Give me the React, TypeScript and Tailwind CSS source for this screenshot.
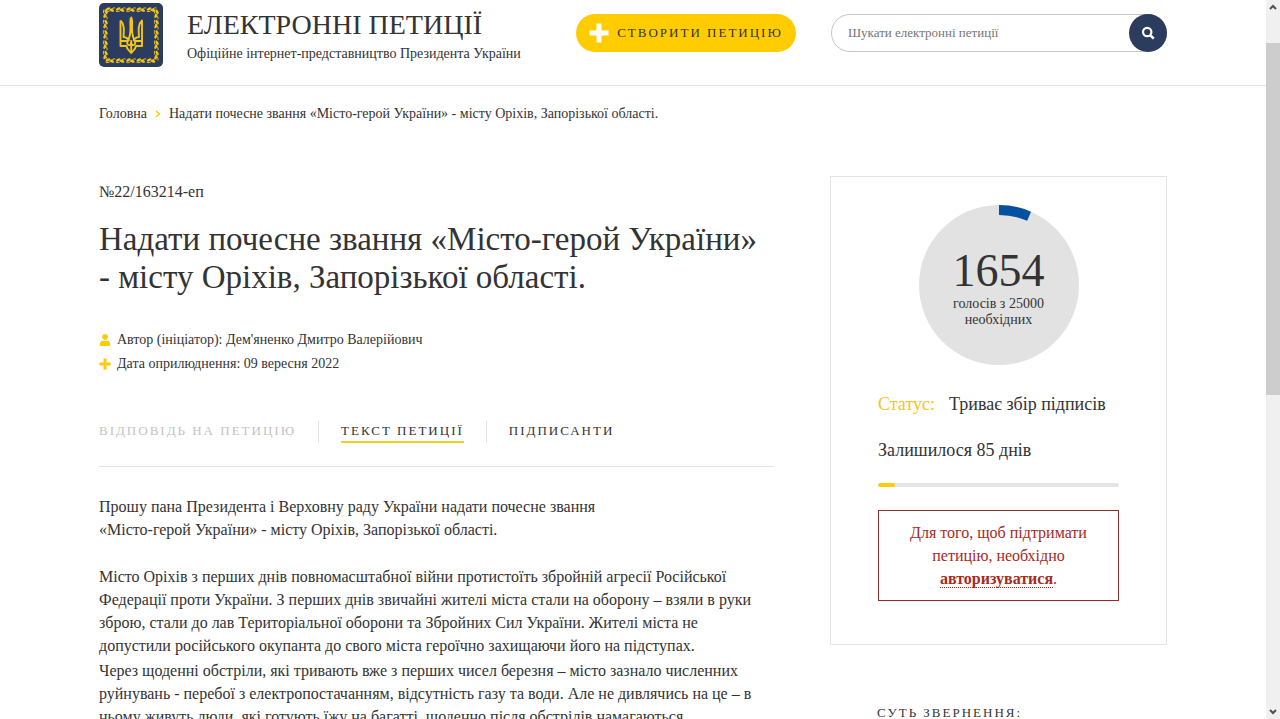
import React from 'react';
import { FaUser } from 'react-icons/fa';

const cells = [0, 1, 2, 3, 4];

function Ornament({ x, y, turn }: { x: number; y: number; turn: number }) {
  return (
    <g transform={`translate(${x} ${y}) rotate(${turn})`} fill="#f3c516">
      <ellipse cx="-2.600" cy="-0.600" rx="2.500" ry="1.300" transform="rotate(-28 -2.600 -0.600)" />
      <ellipse cx="1.400" cy="0.700" rx="2.300" ry="1.300" transform="rotate(24 1.400 0.700)" />
      <path d="M-5 1.600C-3.400 2.600-1.500 2.200 0 0.600S3.200-2.200 4.800-1.400" fill="none" stroke="#f3c516" strokeWidth="1" />
    </g>
  );
}

function PlusIcon({ className }: { className: string }) {
  return (
    <svg className={className} viewBox="0 0 20 20" fill="currentColor" aria-hidden="true">
      <path d="M7.500 0.500H12.500V7.500H19.500V12.500H12.500V19.500H7.500V12.500H0.500V7.500H7.500Z" />
    </svg>
  );
}

function Logo() {
  return (
    <svg className="size-16 shrink-0" viewBox="0 0 64 64" role="img" aria-label="Герб України">
      <rect width="64" height="64" rx="5" fill="#2b3c5e" />
      {cells.map((i) => (
        <g key={i}>
          <Ornament x={11.5 + i * 10.3} y={6.5} turn={0} />
          <Ornament x={11.5 + i * 10.3} y={57.5} turn={0} />
          <Ornament x={6.5} y={11.5 + i * 10.3} turn={90} />
          <Ornament x={57.5} y={11.5 + i * 10.3} turn={90} />
        </g>
      ))}
      <g fill="none" stroke="#f3c516" strokeWidth="1.9" strokeLinejoin="round">
        <path d="M21.500 17.500V43H27.500C28 46.500 30 47 32.200 50C34.400 47 36.400 46.500 37 43H43V17.500C39 21 39.500 27 40 34C37 34.200 35.500 35.500 34.400 38" />
        <path d="M21.500 17.500C25.500 21 25 27 24.500 34C27.500 34.200 29 35.500 30.100 38" />
        <path d="M32.200 14.500C30.800 17 31.400 20 31.500 25C31.500 31 30.600 35 28.500 38.500C27.500 40.500 29 42.500 31 42C32 41.500 32.200 40 32.200 38C32.200 40 32.500 41.500 33.500 42C35.500 42.500 37 40.500 36 38.500C33.900 35 33 31 33 25C33.100 20 33.700 17 32.200 14.500ZM32.200 38V50M21.500 38H28.500M36 38H43" />
      </g>
    </svg>
  );
}

function Header() {
  return (
    <header className="border-b border-[#e4e4e4]">
      <div className="mx-auto flex h-[85px] max-w-[1068px] items-start">
        <div className="flex flex-1 gap-6 pt-[3px]">
          <Logo />
          <div className="pt-1">
            <p className="text-[28px] leading-9 whitespace-nowrap">ЕЛЕКТРОННІ ПЕТИЦІЇ</p>
            <p className="text-[14px] leading-[22px] whitespace-nowrap">Офіційне інтернет-представництво Президента України</p>
          </div>
        </div>
        <button type="button" className="mt-3.5 mr-[35px] flex h-[38px] w-[220px] items-center justify-center gap-2 rounded-full bg-[#ffcc00] text-[13px] tracking-[2px] whitespace-nowrap">
          <PlusIcon className="size-5 text-white" />
          СТВОРИТИ ПЕТИЦІЮ
        </button>
        <form className="mt-3.5 flex h-[38px] w-[336px] rounded-full border border-[#c6c6c6]" role="search">
          <input
            type="text"
            aria-label="Пошук"
            placeholder="Шукати електронні петиції"
            className="min-w-0 flex-1 rounded-full pl-4 text-[13px] outline-none placeholder:text-[#757575]"
          />
          <button type="button" aria-label="Знайти" className="-m-px flex size-[38px] items-center justify-center rounded-full bg-[#2b3c5e]">
            <svg className="size-3.5" viewBox="0 0 14 14" fill="none" stroke="white" aria-hidden="true">
              <circle cx="6.200" cy="6" r="4.200" strokeWidth="2.200" />
              <path d="M9 9L12.800 12.600" strokeWidth="2.500" />
            </svg>
          </button>
        </form>
      </div>
    </header>
  );
}

function VoteCounter() {
  return (
    <div className="relative mx-auto flex size-40 flex-col items-center justify-center rounded-full bg-[#e2e2e2]">
      <svg className="absolute inset-0 size-full" viewBox="0 0 160 160" aria-hidden="true">
        <path d="M80 0A80 80 0 0 1 112 6.700L108.200 15.800A70 70 0 0 0 80 10Z" fill="#0450a1" />
      </svg>
      <p className="pt-1 text-[46px] leading-[50px]">1654</p>
      <p className="text-center text-[14px] leading-4">
        голосів з 25000
        <br />
        необхідних
      </p>
    </div>
  );
}

function Sidebar() {
  return (
    <aside className="w-[337px] shrink-0 pt-[34px]">
      <div className="border border-[#e4e4e4] px-[47px] pt-7 pb-[43px]">
        <VoteCounter />
        <p className="mt-[26px] text-[18px] leading-[26px] whitespace-nowrap">
          <span className="mr-3.5 text-[#f7c325]">Статус:</span>
          Триває збір підписів
        </p>
        <p className="mt-5 text-[18px] leading-[26px]">Залишилося 85 днів</p>
        <div className="mt-5 h-1 overflow-hidden rounded-full bg-[#e4e4e4]">
          <div className="h-full w-[7%] rounded-full bg-[#fdcb0b]" />
        </div>
        <p className="mt-[23px] border border-[#8f2f2b] px-4 py-2.5 text-center text-[16px] leading-[23px] text-[#a52a22]">
          Для того, щоб підтримати
          <br />
          петицію, необхідно
          <br />
          <a href="#login" className="border-b border-dotted border-[#a52a22] font-bold">авторизуватися</a>.
        </p>
      </div>
      <h2 className="mt-14 pl-[47px] text-[13px] leading-6 tracking-[2px]">СУТЬ ЗВЕРНЕННЯ:</h2>
    </aside>
  );
}

function Petition() {
  return (
    <article className="w-[675px]">
      <p className="mt-[38px] text-[16px] leading-6">№22/163214-еп</p>
      <h1 className="mt-4 text-[33px] leading-[38px] whitespace-nowrap">
        Надати почесне звання «Місто-герой України»
        <br />- місту Оріхів, Запорізької області.
      </h1>
      <ul className="mt-8 text-[14px] leading-6">
        <li className="flex items-center gap-1.5">
          <FaUser className="size-3 text-[#fdcb0b]" aria-hidden="true" />
          Автор (ініціатор): Дем'яненко Дмитро Валерійович
        </li>
        <li className="flex items-center gap-1.5">
          <PlusIcon className="size-3 text-[#fdcb0b]" />
          Дата оприлюднення: 09 вересня 2022
        </li>
      </ul>
      <nav className="mt-11 flex border-b border-[#e4e4e4] pb-[23px] text-[13px] leading-[21px] tracking-[2px] whitespace-nowrap">
        <span className="border-r border-[#e4e4e4] pr-[22px] text-[#c3c3c3]">ВІДПОВІДЬ НА ПЕТИЦІЮ</span>
        <span className="border-r border-[#e4e4e4] px-[22px]">
          <a href="#text" className="block border-b-2 border-[#f3cd22]">ТЕКСТ ПЕТИЦІЇ</a>
        </span>
        <a href="#signers" className="pl-[22px]">ПІДПИСАНТИ</a>
      </nav>
      <div className="mt-7 text-[16px] leading-[23px] whitespace-nowrap">
        <p>
          Прошу пана Президента і Верховну раду України надати почесне звання
          <br />
          «Місто-герой України» - місту Оріхів, Запорізької області.
        </p>
        <p className="mt-6">
          Місто Оріхів з перших днів повномасштабної війни протистоїть збройній агресії Російської
          <br />
          Федерації проти України. З перших днів звичайні жителі міста стали на оборону – взяли в руки
          <br />
          зброю, стали до лав Територіальної оборони та Збройних Сил України. Жителі міста не
          <br />
          допустили російського окупанта до свого міста героїчно захищаючи його на підступах.
        </p>
        <p className="mt-0.5">
          Через щоденні обстріли, які тривають вже з перших чисел березня – місто зазнало численних
          <br />
          руйнувань - перебої з електропостачанням, відсутність газу та води. Але не дивлячись на це – в
          <br />
          ньому живуть люди, які готують їжу на багатті, щоденно після обстрілів намагаються
        </p>
      </div>
    </article>
  );
}

function Scrollbar() {
  return (
    <div className="flex w-3.5 shrink-0 flex-col items-center bg-[#f0f0f0]" aria-hidden="true">
      <svg className="mt-0.5 h-2.5 w-2.5" viewBox="0 0 10 10" fill="none" stroke="#505050" strokeWidth="2">
        <path d="M2 7L5 4L8 7" />
      </svg>
      <div className="mt-[31px] h-[49%] w-full bg-[#cdcdcd]" />
      <svg className="mt-auto mb-0.5 h-2.5 w-2.5" viewBox="0 0 10 10" fill="none" stroke="#505050" strokeWidth="2">
        <path d="M2 3L5 6L8 3" />
      </svg>
    </div>
  );
}

export default function App() {
  return (
    <div className="flex h-screen bg-white font-[Georgia,'Liberation_Serif',serif] text-[#333333]">
      <div className="min-w-0 flex-1 overflow-hidden">
        <Header />
        <main className="mx-auto max-w-[1068px]">
          <nav className="flex items-center gap-2 pt-4 text-[14px] leading-6" aria-label="Шлях">
            <a href="#home">Головна</a>
            <svg className="h-2 w-1.5" viewBox="0 0 6 8" fill="none" stroke="#fdcb0b" strokeWidth="1.500" aria-hidden="true">
              <path d="M1 1L4.500 4L1 7" />
            </svg>
            <span>Надати почесне звання «Місто-герой України» - місту Оріхів, Запорізької області.</span>
          </nav>
          <div className="flex items-start justify-between pt-4">
            <Petition />
            <Sidebar />
          </div>
        </main>
      </div>
      <Scrollbar />
    </div>
  );
}
